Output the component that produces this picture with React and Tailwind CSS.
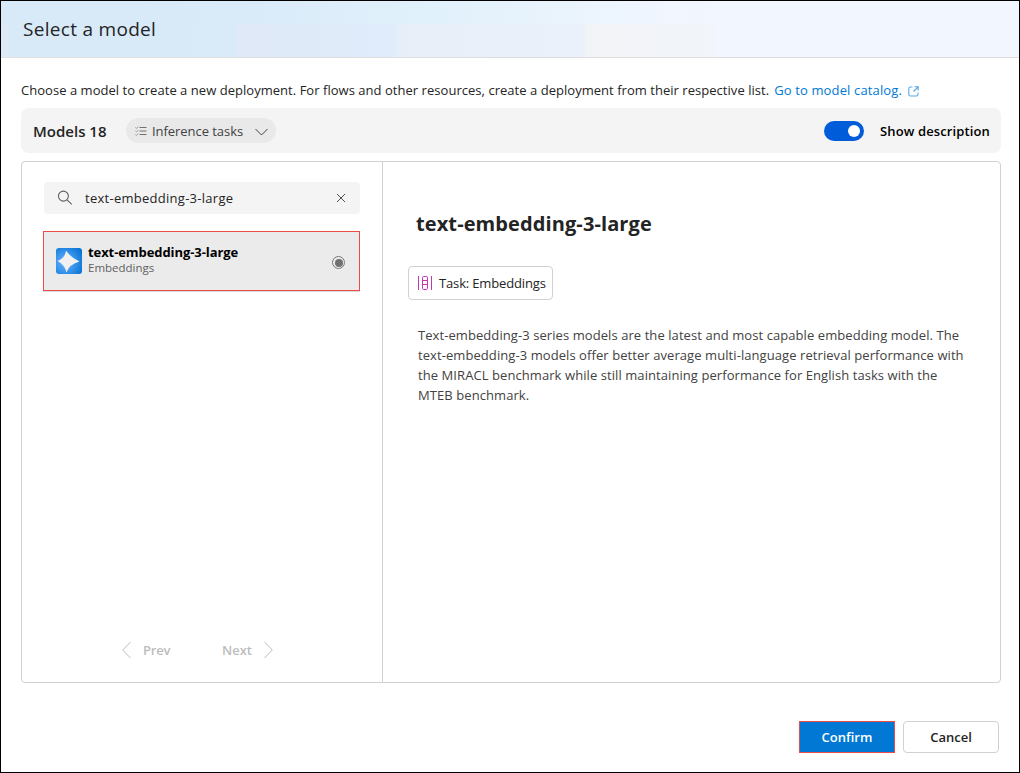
const font = "font-['Open_Sans','Noto_Sans',sans-serif]";

function SearchIcon() {
  return (
    <svg width="16" height="16" viewBox="0 0 16 16" fill="none" stroke="#616161" strokeWidth="1.1">
      <circle cx="6.4" cy="6.1" r="5" />
      <path d="M10 9.800 14.800 14.300" />
    </svg>
  );
}

function TaskListIcon() {
  return (
    <svg width="12" height="10" viewBox="0 0 12 10" fill="none" stroke="#707070" strokeWidth="1">
      <path d="M4.5 1.5H11.500M4.5 5H11.500M4.5 8.5H11.500" />
      <path stroke="#999" d="M.5 1.5 1.5 2.4 3.2.6M.5 5 1.5 5.9 3.2 4.1M.5 8.5 1.5 9.4 3.2 7.6" />
    </svg>
  );
}

function ExternalIcon() {
  return (
    <svg width="11" height="11" viewBox="0 0 11 11" fill="none" stroke="#5aa8e2" strokeWidth="1.1">
      <path d="M4.500 1H2.400A1.600 1.600 0 0 0 .8 2.600v5.800A1.600 1.600 0 0 0 2.400 10h6a1.600 1.600 0 0 0 1.600-1.600V6.500M6.500.8H10.200V4.500M10 1 5.500 5.500" />
    </svg>
  );
}

function ModelLogo() {
  return (
    <svg width="26" height="26" viewBox="0 0 26 26">
      <defs>
        <radialGradient id="logo" cx=".35" cy=".55" r=".75">
          <stop offset="0" stopColor="#6cb2f8" />
          <stop offset=".45" stopColor="#3d98ee" />
          <stop offset="1" stopColor="#0873d2" />
        </radialGradient>
      </defs>
      <rect width="26" height="26" rx="3" fill="url(#logo)" />
      <path d="M10 2.500Q14.500 9.500 23.500 13.500Q13.500 16 10.500 24.500Q8.500 16.500 1.500 13Q9 10.500 10 2.500Z" fill="#f1f1f1" />
    </svg>
  );
}

function EmbeddingIcon() {
  return (
    <svg width="16" height="16" viewBox="0 0 16 16" fill="none" stroke="#c239b3" strokeWidth="1">
      <path d="M1.500 1V15M14.500 1V15" />
      <rect x="5.500" y="1.500" width="5" height="13" rx="1.200" />
      <path d="M5.500 5.500h5M5.500 9.500h5" />
    </svg>
  );
}

export default function App() {
  return (
    <div className={`flex h-[773px] w-[1020px] flex-col border border-black bg-white text-[13px] text-[#242424] ${font}`}>
      <header className="flex h-[57px] shrink-0 items-center border-b border-[#dedede] bg-[linear-gradient(90deg,#dfe9f7_0px,#d8eaf8_14px,#d9eaf9_235px,#dfe9f8_236px,#e0ecfb_392px,#e8eff8_402px,#eaf1fb_582px,#f1f3f7_586px,#f2f5fa_713px,#f2f6fe_716px),linear-gradient(90deg,#d8eaf8_0px,#d9eaf9_240px,#e1f1fb_430px,#e8f3fc_540px,#f1f6ff_670px,#f2f6fe_720px)] bg-[length:100%_33px,100%_100%] bg-[position:bottom,top] bg-no-repeat pl-[22px]">
        <h1 className="text-[19px] leading-[24px] tracking-[0.3px]">Select a model</h1>
      </header>

      <main className="flex flex-1 flex-col px-5">
        <p className="mt-[24px] flex h-[18px] items-center whitespace-nowrap">
          <span className="tracking-[0.035px]">Choose a model to create a new deployment. For flows and other resources, create a deployment from their respective list.</span>
          <a href="#" className="ml-[5px] tracking-[0.14px] text-[#0078d4]">Go to model catalog.</a>
          <span className="ml-[6px]"><ExternalIcon /></span>
        </p>

        <div className="mt-2 flex h-[45px] w-[980px] shrink-0 items-center rounded-lg bg-[#f4f4f4] pl-3 pr-[11px]">
          <h2 className="w-[93px] whitespace-nowrap pt-px text-[15px] font-semibold">Models 18</h2>
          <button className="flex h-[25px] w-[150px] items-center rounded-full bg-[#e9e9e9] pl-[9px] text-[#424242]">
            <TaskListIcon />
            <span className="ml-[5px] w-[103px] whitespace-nowrap pt-[2px] text-left tracking-[-0.05px]">Inference tasks</span>
            <svg className="mt-[3px]" width="13" height="8" viewBox="0 0 13 8" fill="none" stroke="#424242"><path d="M.5 1 6.500 7 12.500 1" /></svg>
          </button>
          <div className="ml-auto flex items-center">
            <div className="flex h-5 w-10 items-center justify-end rounded-full bg-[#015cda] pr-1"><div className="size-3 rounded-full bg-white" /></div>
            <span className="ml-4 whitespace-nowrap font-semibold leading-5 tracking-[0.12px] text-black">Show description</span>
          </div>
        </div>

        <section className="mt-2 flex h-[522px] w-[980px] shrink-0 rounded border border-[#d1d1d1]">
          <aside className="flex w-[361px] shrink-0 flex-col border-r border-[#d1d1d1] pl-[21px]">
            <div className="ml-px mt-5 flex h-8 w-[316px] items-center rounded bg-[#f4f4f4] pl-[13px]">
              <SearchIcon />
              <span className="ml-3 pt-px tracking-[0.27px]">text-embedding-3-large</span>
              <svg className="ml-auto mr-[14px]" width="10" height="10" viewBox="0 0 10 10" stroke="#505050"><path d="M1 1 9 9M9 1 1 9" /></svg>
            </div>
            <div className="mt-[17px] flex h-[60px] w-[317px] shrink-0 items-center border border-[#f04a49] bg-[#ebebeb] pl-3 shadow-[0_1px_0_#d9d9d9]">
              <ModelLogo />
              <div className="mb-1 ml-[6px]">
                <div className="text-[13px] font-bold leading-[17px] tracking-[-0.08px] text-black">text-embedding-3-large</div>
                <div className="text-[11.500px] leading-[14px] text-[#616161]">Embeddings</div>
              </div>
              <span className="ml-auto mr-[14px] mt-[3px] flex size-[13px] items-center justify-center rounded-full border border-[#777]"><span className="size-2 rounded-full bg-[#707070]" /></span>
            </div>
            <nav className="mb-[22px] mt-auto flex items-center pl-[79px] font-semibold text-[#bdbdbd]">
              <svg width="9" height="16" viewBox="0 0 9 16" fill="none" stroke="#bdbdbd"><path d="M8.500 0 .7 8 8.500 16" /></svg>
              <span className="ml-3 w-[79px] tracking-[-0.2px]">Prev</span>
              <span className="w-[42px]">Next</span>
              <svg width="9" height="16" viewBox="0 0 9 16" fill="none" stroke="#bdbdbd"><path d="M.5 0 8.300 8 .5 16" /></svg>
            </nav>
          </aside>
          <article className="flex flex-1 flex-col items-start pl-[25px]">
            <h2 className="ml-2 mt-12 text-[20px] font-bold leading-[28px] tracking-[0.1px]">text-embedding-3-large</h2>
            <div className="mt-7 flex h-[34px] w-[145px] items-center rounded border border-[#d1d1d1] pl-2">
              <EmbeddingIcon />
              <span className="ml-[6px] whitespace-nowrap pt-px tracking-[-0.15px]">Task: Embeddings</span>
            </div>
            <p className="ml-[10px] mt-[25px] whitespace-nowrap leading-5 tracking-[0.075px] text-[#424242]">
              Text-embedding-3 series models are the latest and most capable embedding model. The<br />
              text-embedding-3 models offer better average multi-language retrieval performance with<br />
              the MIRACL benchmark while still maintaining performance for English tasks with the<br />
              MTEB benchmark.
            </p>
          </article>
        </section>

        <footer className="mt-[38px] flex justify-end gap-2 font-semibold">
          <button className="h-8 w-24 border border-[#f04a49] bg-[#0078d4] pt-px text-white">Confirm</button>
          <button className="h-8 w-24 rounded border border-[#d1d1d1] bg-white pt-px">Cancel</button>
        </footer>
      </main>
    </div>
  );
}
